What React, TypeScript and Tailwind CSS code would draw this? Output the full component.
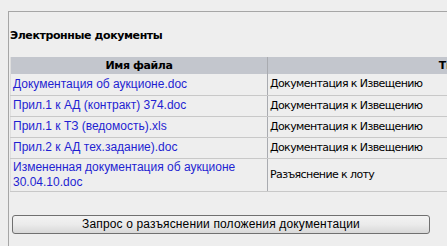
export default function App() {
  const rows = [
    { name: "Документация об аукционе.doc", type: "Документация к Извещению" },
    { name: "Прил.1 к АД (контракт) 374.doc", type: "Документация к Извещению" },
    { name: "Прил.1 к ТЗ (ведомость).xls", type: "Документация к Извещению" },
    { name: "Прил.2 к АД тех.задание).doc", type: "Документация к Извещению" },
    { name: "Измененная документация об аукционе 30.04.10.doc", type: "Разъяснение к лоту" },
  ];

  return (
    <div className="w-[447px] h-[246px] overflow-hidden bg-[#eeeeee] pt-[11px] pl-[8px] font-['Liberation_Sans',Arial,sans-serif]">
      <div className="h-full border-l border-t border-[#a6a6a6] pl-[1px]">
        <div className="pt-[16px] h-[45px] text-[11px] font-bold text-black font-['DejaVu_Sans',sans-serif] tracking-[-0.4px]">
          Электронные документы
        </div>

        <table className="w-[690px] border-collapse table-fixed">
          <colgroup>
            <col className="w-[257px]" />
            <col />
          </colgroup>
          <thead>
            <tr className="h-[17px] bg-[#c3c6cd]">
              <th className="border-l border-[#dedede] border-r border-r-[#a9abb0] text-[11px] font-bold text-black font-['DejaVu_Sans',sans-serif] tracking-[-0.4px] leading-[17px] p-0 text-center">
                Имя файла
              </th>
              <th className="text-[11px] font-bold text-black font-['DejaVu_Sans',sans-serif] tracking-[-0.4px] leading-[17px] p-0 text-center">
                Тип документа
              </th>
            </tr>
          </thead>
          <tbody>
            {rows.map((r, i) => (
              <tr key={i} className={i === 4 ? "h-[33px]" : "h-[21px]"}>
                <td className="border-l border-[#dedede] border-b border-b-[#c8c8c8] border-r border-r-[#a9abb0] px-[2px] py-0 align-middle text-[12px] leading-[15px] text-[#1f1fd2]">
                  {r.name}
                </td>
                <td className="border-b border-[#c8c8c8] px-[2px] py-0 align-middle text-[11px] leading-[14px] text-black font-['DejaVu_Sans',sans-serif] tracking-[-0.6px]">
                  {r.type}
                </td>
              </tr>
            ))}
          </tbody>
        </table>

        <div className="pt-[19px] pl-[2px]">
          <button className="w-[418px] h-[19px] rounded-[3px] border border-[#707070] bg-gradient-to-b from-[#f3f3f3] via-[#ebebeb] to-[#d8d8d8] text-[12px] tracking-[0.15px] leading-[17px] text-black">
            Запрос о разъяснении положения документации
          </button>
        </div>
      </div>
    </div>
  );
}
